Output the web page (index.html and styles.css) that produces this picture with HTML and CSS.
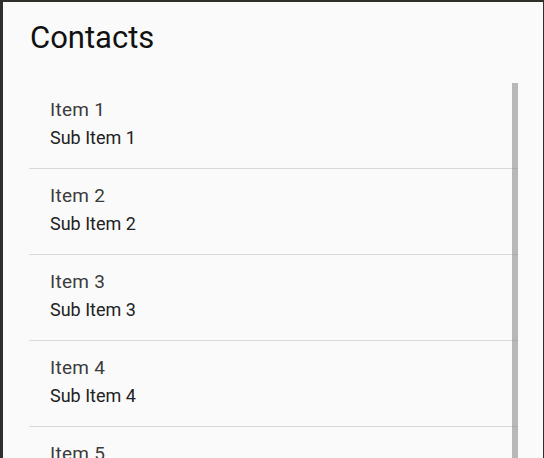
FILE: index.html
```html
<!DOCTYPE html>
<html lang="en">
<head>
    <meta charset="UTF-8">
    <meta name="viewport" content="width=device-width, initial-scale=1.0">
    <title>Contacts</title>
    <link rel="stylesheet" href="styles.css">
</head>
<body>
    <div class="screen">
        <h1 class="title">Contacts</h1>
        <div class="list">
            <div class="item">
                <div class="item-title">Item 1</div>
                <div class="item-sub">Sub Item 1</div>
            </div>
            <div class="item">
                <div class="item-title">Item 2</div>
                <div class="item-sub">Sub Item 2</div>
            </div>
            <div class="item">
                <div class="item-title">Item 3</div>
                <div class="item-sub">Sub Item 3</div>
            </div>
            <div class="item">
                <div class="item-title">Item 4</div>
                <div class="item-sub">Sub Item 4</div>
            </div>
            <div class="item">
                <div class="item-title">Item 5</div>
                <div class="item-sub">Sub Item 5</div>
            </div>
            <div class="scroll-thumb"></div>
        </div>
    </div>
</body>
</html>
```

FILE: styles.css
```css
body, html {
    margin: 0;
    padding: 0;
    height: 100%;
    overflow: hidden;
    background-color: #2e2f2b;
    font-family: Roboto, "Liberation Sans", sans-serif;
}
.screen {
    margin: 2px 1px 0 3px;
    height: calc(100% - 2px);
    background-color: #fafafa;
    padding-top: 16px;
    box-sizing: border-box;
}
.title {
    margin: 0 0 25px 27px;
    font-size: 31px;
    line-height: 40px;
    font-weight: normal;
    color: #111;
}
.list {
    position: relative;
    margin: 0 25px 0 26px;
}
.item {
    padding: 12px 0 17px 21px;
    border-bottom: 1px solid #d9d9d9;
}
.item-title {
    font-size: 19px;
    line-height: 30px;
    letter-spacing: 0.3px;
    color: #3c3c3c;
}
.item-sub {
    font-size: 18px;
    line-height: 26px;
    color: #222;
}
.scroll-thumb {
    position: absolute;
    top: 0;
    right: 0;
    bottom: 0;
    width: 6px;
    background-color: rgba(140, 140, 140, 0.6);
}
```
